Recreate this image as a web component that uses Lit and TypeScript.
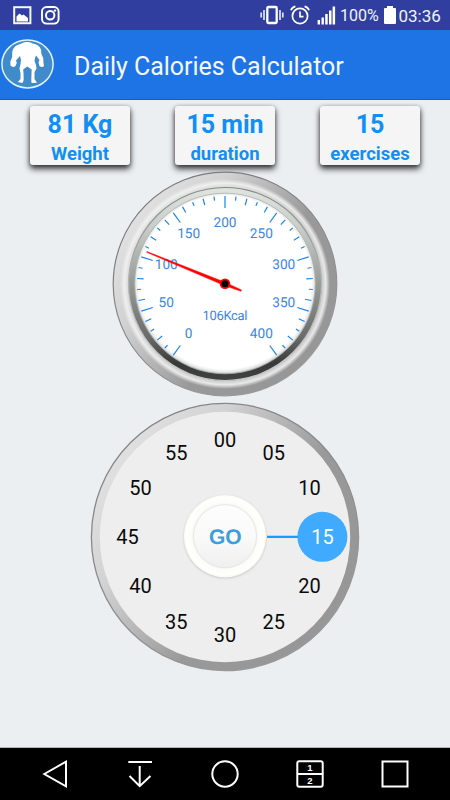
import { LitElement, html, svg, css } from "lit";
import { customElement, property } from "lit/decorators.js";

const polar = (cx: number, cy: number, r: number, deg: number) => {
  const a = (deg * Math.PI) / 180;
  return { x: cx + r * Math.sin(a), y: cy - r * Math.cos(a) };
};

@customElement("status-bar")
class StatusBar extends LitElement {
  static styles = css`
    :host { display: flex; align-items: center; justify-content: space-between; height: 30px; background: #303f9f; color: #f3f4fb; font-family: Roboto, sans-serif; }
    svg { display: block; flex: none; }
    .left { display: flex; gap: 9px; padding-left: 13px; }
    .right { display: flex; align-items: center; padding-right: 8px; }
    .vibrate { margin-right: 6px; }
    .alarm { margin-right: 7px; }
    .signal { margin-right: 4px; }
    .pct { font-size: 16px; line-height: 30px; width: 40.5px; margin-top: 2px; white-space: nowrap; }
    .battery { margin: 0 3px 0 3px; }
    .time { font-size: 17px; line-height: 30px; margin-top: 1px; width: 43.5px; white-space: nowrap; }
  `;
  render() {
    return html`
      <div class="left">
        <svg width="19" height="19" viewBox="0 0 19 19">
          <rect x="1.2" y="1.2" width="16.2" height="16" fill="none" stroke="#f6f6fc" stroke-width="2" />
          <path d="M3.5 15.5V10.500L6.5 7.500L9 9.5L10.5 8.5L15 12V15.5Z" fill="#fff" />
        </svg>
        <svg width="19" height="19" viewBox="0 0 19 19">
          <rect x="1" y="1" width="16.6" height="16.6" rx="4.5" fill="none" stroke="#fff" stroke-width="1.9" />
          <circle cx="9.2" cy="9.3" r="4.2" fill="none" stroke="#fff" stroke-width="2" />
          <circle cx="14" cy="4.6" r="1.2" fill="#fff" />
        </svg>
      </div>
      <div class="right">
        <svg class="vibrate" width="24" height="20" viewBox="0 0 24 20">
          <path d="M1.2 7.5V12.5M4 5V15M20 5V15M22.8 7.5V12.5" stroke="#dfe1f3" stroke-width="1.7" />
          <rect x="7.3" y="2" width="9.4" height="16" rx="1" fill="none" stroke="#fff" stroke-width="2.3" />
        </svg>
        <svg class="alarm" width="20" height="20" viewBox="0 0 20 20" fill="none" stroke="#fff" stroke-width="1.7">
          <circle cx="10" cy="11" r="7.6" />
          <path d="M.9 5.2Q2.2 2 5.4 1.3M19.1 5.2Q17.8 2 14.6 1.3" stroke-width="1.7" />
          <path d="M10 6.5V11.6H13.5" />
        </svg>
        <svg class="signal" width="19" height="19" viewBox="0 0 19 19" fill="#fff">
          <path d="M.6 14h2.4v4.5H.6zM4.5 11.5h2.4v7H4.5zM8.2 8h2.5v10.500H8.200zM12 4.500h2.500v14H12zM15.600.5h2.500v18H15.600z" />
        </svg>
        <div class="pct">100%</div>
        <svg class="battery" width="12" height="18" viewBox="0 0 12 18"><path d="M3 0h6v2h2q1 0 1 1v14q0 1-1 1H1q-1 0-1-1V3q0-1 1-1h2z" fill="#fff" /></svg>
        <div class="time">03:36</div>
      </div>`;
  }
}

@customElement("title-bar")
class TitleBar extends LitElement {
  static styles = css`
    :host { display: flex; align-items: center; height: 69px; border-bottom: 1px solid #0b5edb; background: #1e74e4; }
    svg { display: block; flex: none; margin-left: 1px; width: 53px; height: 50px; margin-top: -1px; }
    h1 { margin: 4px 0 0 20px; font: 400 25px/30px Roboto, sans-serif; letter-spacing: -.03px; color: #f3f7ff; white-space: nowrap; }
  `;
  render() {
    return html`
      <svg viewBox="1 39 53 50">
        <ellipse cx="27.500" cy="64" rx="25.600" ry="23.900" fill="#428bca" stroke="#dff2fd" stroke-width="1.500" />
        <path fill="#fff" d="M21.500 43.500Q24 41.500 27 42Q30.500 41.500 32.500 43.500Q37.500 44 40 47.500Q41.700 50 41.300 53.500L43.200 58L43.500 63L44 66Q42 68 39.500 66L38.500 62.500L39.500 60L36 55.500L35 58L34.500 61L36 65L36.500 68.500L34.500 72L34.500 79L37 82.700L31.500 83L31.300 80L31.500 73L31.700 69.500L27.300 66.500L23.200 69.500L23.500 73L23.700 80L22.500 83L17.800 82L20.500 79L20.500 73L19.500 68.500L20.500 64L21 60L20 56L16 60.500L16.800 63L15.500 66Q13 68.200 10.500 65.500L10.300 61.500L12.200 57L12.200 52.500Q12.700 47 17.500 45Z" />
      </svg>
      <h1>Daily Calories Calculator</h1>`;
  }
}

@customElement("stat-card")
class StatCard extends LitElement {
  @property() value = "";
  @property() label = "";
  static styles = css`
    :host { display: flex; flex-direction: column; align-items: center; width: 100px; height: 59px; border-radius: 3px; background: #f5f5f5; color: #128ff3; box-shadow: 0 4px 6px rgba(0, 0, 0, .7), 0 1px 4px rgba(0, 0, 0, .4); font-family: Roboto, sans-serif; font-weight: 700; white-space: nowrap; }
    .value { font-size: 25px; line-height: 30px; margin-top: 4px; }
    .label { font-size: 18.500px; line-height: 24px; margin-top: 2px; }
  `;
  render() {
    return html`<div class="value">${this.value}</div><div class="label">${this.label}</div>`;
  }
}

@customElement("calorie-gauge")
class CalorieGauge extends LitElement {
  @property({ type: Number }) value = 106;
  static styles = css`
    :host { display: block; width: 226px; height: 226px; }
    svg { display: block; }
    text { font: 400 13.600px Roboto, sans-serif; fill: #3a86e2; text-anchor: middle; text-rendering: geometricPrecision; }
    .reading { font-size: 13px; }
    .tick { stroke: #1a86ea; stroke-width: 1.200; }
  `;
  render() {
    const c = 113;
    const angle = -144 + this.value * 0.72;
    const ticks = Array.from({ length: 41 }, (_, k) => {
      const inner = k % 5 === 0 ? 76 : k % 2 === 0 ? 81.5 : 84;
      const a = polar(c, c, 88, -144 + k * 7.2);
      const b = polar(c, c, inner, -144 + k * 7.2);
      return svg`<line class="tick" x1=${a.x} y1=${a.y} x2=${b.x} y2=${b.y} />`;
    });
    const labels = Array.from({ length: 9 }, (_, i) => {
      const p = polar(c, c, 61.8, -144 + i * 36);
      return svg`<text x=${p.x} y=${p.y + 4.4}>${i * 50}</text>`;
    });
    return html`
      <svg width="226" height="226" viewBox="0 0 226 226">
        <defs>
          <linearGradient id="rim" x1=".08" y1=".22" x2=".85" y2=".75">
            <stop offset="0" stop-color="#e0e0e0" /><stop offset=".25" stop-color="#d2d2d2" /><stop offset=".68" stop-color="#999" /><stop offset="1" stop-color="#979797" />
          </linearGradient>
          <linearGradient id="edge" x1=".2" y1="0" x2=".7" y2=".9">
            <stop offset="0" stop-color="#777" /><stop offset=".5" stop-color="#888" /><stop offset="1" stop-color="#999" />
          </linearGradient>
          <radialGradient id="shine" gradientUnits="userSpaceOnUse" cx="113" cy="113" r="105">
            <stop offset=".92" stop-color="#ddd" stop-opacity=".7" /><stop offset=".96" stop-color="#f2f2f2" stop-opacity=".9" /><stop offset="1" stop-color="#eee" stop-opacity="0" />
          </radialGradient>
          <linearGradient id="groove" x1="0" y1="0" x2="0" y2="1">
            <stop offset="0" stop-color="#dfe4df" /><stop offset=".2" stop-color="#c8cec9" /><stop offset=".5" stop-color="#969b97" /><stop offset=".78" stop-color="#686b69" /><stop offset=".91" stop-color="#383a39" /><stop offset="1" stop-color="#404141" />
          </linearGradient>
          <linearGradient id="lip" x1="0" y1="0" x2="0" y2="1">
            <stop offset="0" stop-color="#858885" /><stop offset=".5" stop-color="#b3b6b3" /><stop offset="1" stop-color="#c8c8c8" />
          </linearGradient>
          <radialGradient id="face" gradientUnits="userSpaceOnUse" cx="113" cy="111.500" r="92">
            <stop offset=".94" stop-color="#fff" /><stop offset=".97" stop-color="#e9e9e9" /><stop offset="1" stop-color="#b5b7b5" />
          </radialGradient>
        </defs>
        <circle cx="113" cy="113" r="111.800" fill="url(#rim)" stroke="url(#edge)" stroke-width="1.200" />
        <circle cx="113" cy="113" r="105" fill="url(#shine)" />
        <circle cx="113" cy="113" r="96.500" fill="url(#groove)" stroke="url(#lip)" stroke-width="1.200" />
        <circle cx="113" cy="112.500" r="90.300" fill="url(#face)" stroke="#aeb1ae" stroke-width=".8" />
        ${ticks}${labels}
        <text class="reading" x="113" y="149.300" textLength="45">${this.value}Kcal</text>
        <path transform="rotate(${angle} 113 113)" d="M112.600 28.500H113.400L114.700 113L113.700 130.500H112.300L111.300 113Z" fill="#f00" stroke="#f00" stroke-width=".8" stroke-opacity=".5" />
        <circle cx="113" cy="112.800" r="5.300" fill="#f00" />
        <circle cx="113" cy="112.800" r="3.500" fill="#000" /><circle cx="113" cy="112.800" r=".6" fill="#333" />
      </svg>`;
  }
}

@customElement("minute-dial")
class MinuteDial extends LitElement {
  @property({ type: Number }) minutes = 15;
  static styles = css`
    :host { display: block; width: 270px; height: 270px; }
    svg { display: block; }
    text { font: 400 20px Roboto, sans-serif; fill: #0a0a0a; text-anchor: middle; }
    .on { fill: #fff; }
    .go { font: 700 21px "Liberation Sans", Arial, sans-serif; fill: #3a9fdc; text-rendering: geometricPrecision; }
  `;
  render() {
    const c = 135;
    const deg = this.minutes * 6;
    const knob = polar(c, c - 0.2, 97.4, deg);
    const start = polar(c, c - 0.2, 42, deg);
    const labels = Array.from({ length: 12 }, (_, i) => {
      const p = polar(c, c, 97.5, i * 30);
      return svg`<text class=${i * 5 === this.minutes ? "on" : ""} x=${p.x} y=${p.y + 7.1}>${String(i * 5).padStart(2, "0")}</text>`;
    });
    return html`
      <svg width="270" height="270" viewBox="0 0 270 270">
        <defs>
          <linearGradient id="ring" x1=".08" y1=".22" x2=".85" y2=".75">
            <stop offset="0" stop-color="#e0e0e0" /><stop offset=".25" stop-color="#d2d2d2" /><stop offset=".68" stop-color="#999" /><stop offset="1" stop-color="#979797" />
          </linearGradient>
          <linearGradient id="edge" x1=".2" y1="0" x2=".7" y2=".9">
            <stop offset="0" stop-color="#858585" /><stop offset=".5" stop-color="#8b8b8b" /><stop offset="1" stop-color="#999" />
          </linearGradient>
          <linearGradient id="cap" x1="0" y1="0" x2="0" y2="1">
            <stop offset="0" stop-color="#fdfdfd" /><stop offset=".5" stop-color="#fafafb" /><stop offset="1" stop-color="#efeff0" />
          </linearGradient>
          <radialGradient id="collar" gradientUnits="userSpaceOnUse" cx="135" cy="134" r="42">
            <stop offset=".75" stop-color="#f5f5f2" /><stop offset=".8" stop-color="#fcfcf9" /><stop offset=".93" stop-color="#fffffc" /><stop offset="1" stop-color="#f4f4f1" />
          </radialGradient>
          <filter id="soft" x="-20%" y="-20%" width="140%" height="140%"><feGaussianBlur stdDeviation=".8" /></filter>
        </defs>
        <circle cx="135" cy="135" r="133.600" fill="url(#ring)" stroke="url(#edge)" stroke-width="1.300" />
        <circle cx="135" cy="135" r="125.200" fill="#eee" />
        <line x1=${start.x} y1=${start.y} x2=${knob.x} y2=${knob.y} stroke="#129dff" stroke-width="2.200" />
        <circle cx=${knob.x} cy=${knob.y} r="25" fill="#3faaff" />
        ${labels}
        <circle cx="135" cy="135" r="41.300" fill="#c9c9c7" filter="url(#soft)" />
        <circle cx="135" cy="134.200" r="41.200" fill="url(#collar)" />
        <circle cx="135" cy="134.200" r="31.500" fill="url(#cap)" stroke="#e7e7e5" stroke-width="1" />
        <text class="go" x="135.300" y="142">GO</text>
      </svg>`;
  }
}

@customElement("nav-bar")
class NavBar extends LitElement {
  static styles = css`
    :host { display: flex; justify-content: space-around; align-items: center; height: 52px; padding: 0 12px; background: #000; border-top: 1px solid #b1b5ba; }
    svg { display: block; width: 30px; height: 30px; fill: none; stroke: #fff; stroke-width: 2; }
    text { font: 700 9.500px "Liberation Sans", Arial, sans-serif; fill: #fff; stroke: none; text-anchor: middle; }
  `;
  render() {
    return html`
      <svg viewBox="0 0 30 30"><path d="M4.300 15L26 2.700V27.300Z" /></svg>
      <svg viewBox="0 0 30 30"><path d="M3.300 3H27M14.700 7V27M4.500 17L14.700 27.200L25.500 17" /></svg>
      <svg viewBox="0 0 30 30"><circle cx="15" cy="15" r="12.700" /></svg>
      <svg viewBox="0 0 30 30"><rect x="2.300" y="2.300" width="25.400" height="25.400" rx="2" /><path d="M2.300 15H27.700" /><text x="15" y="12.300">1</text><text x="15" y="24.900">2</text></svg>
      <svg viewBox="0 0 30 30"><rect x="2.500" y="2.500" width="25" height="25" /></svg>`;
  }
}

@customElement("app-root")
class AppRoot extends LitElement {
  static styles = css`
    :host { display: flex; flex-direction: column; width: 450px; height: 800px; overflow: hidden; background: #ebeff2; }
    .cards { display: flex; justify-content: space-between; padding: 6px 30px 0; }
    .dials { flex: 1; display: flex; flex-direction: column; align-items: center; gap: 5px; padding-top: 6px; }
  `;
  render() {
    return html`
      <status-bar></status-bar>
      <title-bar></title-bar>
      <div class="cards">
        <stat-card value="81 Kg" label="Weight"></stat-card>
        <stat-card value="15 min" label="duration"></stat-card>
        <stat-card value="15" label="exercises"></stat-card>
      </div>
      <div class="dials">
        <calorie-gauge value="106"></calorie-gauge>
        <minute-dial minutes="15"></minute-dial>
      </div>
      <nav-bar></nav-bar>`;
  }
}
